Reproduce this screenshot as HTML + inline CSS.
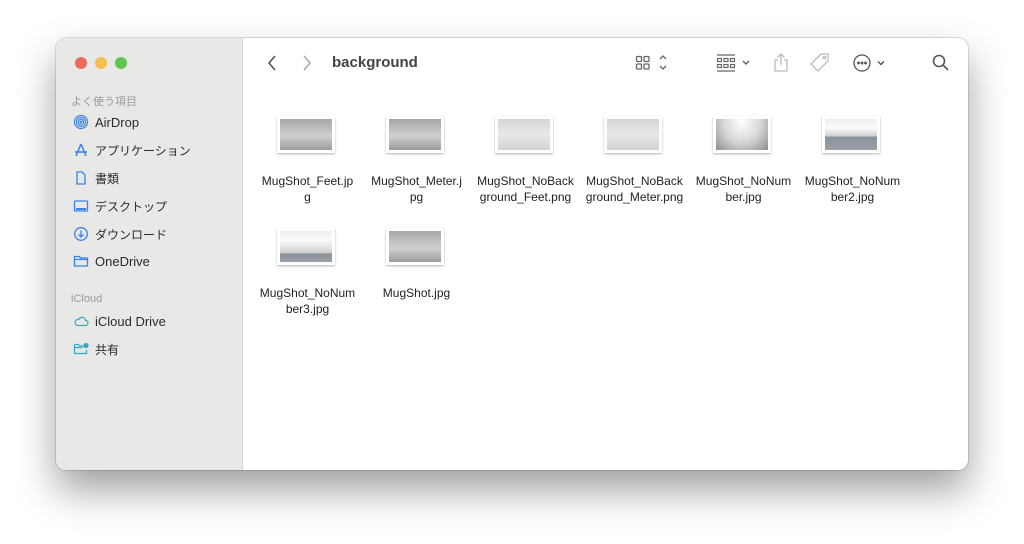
<!DOCTYPE html>
<html><head><meta charset="utf-8"><style>
*{margin:0;padding:0;box-sizing:border-box}
body{width:1024px;height:544px;background:#fff;position:relative;overflow:hidden;font-family:"Liberation Sans","Noto Sans CJK JP",sans-serif}
.win{position:absolute;left:56px;top:38px;width:912px;height:432px;border-radius:10px;background:#fff;box-shadow:0 20px 40px rgba(0,0,0,.38),0 0 0 1px rgba(0,0,0,.12);overflow:hidden}
.side{position:absolute;left:0;top:0;width:187px;height:432px;background:#e8e8e7;border-right:1px solid #d6d6d6}
.dot{position:absolute;top:19px;width:12px;height:12px;border-radius:50%}
.hdr{position:absolute;left:15px;font-size:11px;color:#9a9a9a}
.it{position:absolute;left:17px;font-size:13px;color:#2b2b2b;display:flex;align-items:center;height:18px}
.it.j{font-size:12px}
.it svg{width:16px;height:16px;margin-right:6px}
.title{position:absolute;left:276px;top:16px;font-size:15px;font-weight:bold;color:#444}
.tb{position:absolute;top:14px}
.f{position:absolute;width:109px;text-align:center;font-size:12px;line-height:16px;color:#222}
.fr{position:absolute;left:24px;top:1px;width:58px;height:37px;background:#fff;box-shadow:0 1px 2px rgba(0,0,0,.3);padding:3px}
.im{width:100%;height:100%}
.lb{position:absolute;left:0;width:109px}
</style></head><body>
<div class="win">
<div class="side">
<div class="dot" style="left:19px;background:#ec6a5e"></div>
<div class="dot" style="left:39px;background:#f4bf4f"></div>
<div class="dot" style="left:59px;background:#61c554"></div>
<div class="hdr" style="top:55px">よく使う項目</div>
<div class="it" style="top:75px"><svg viewBox="0 0 16 16" fill="none" stroke="#3b82e6" stroke-width="1.2"><circle cx="8" cy="8" r="6.5"/><circle cx="8" cy="8" r="4.5"/><circle cx="8" cy="8" r="2.5"/><circle cx="8" cy="8" r=".6" fill="#3b82e6"/></svg>AirDrop</div>
<div class="it j" style="top:103px"><svg viewBox="0 0 16 16" fill="none" stroke="#3b82e6" stroke-width="1.5"><path d="M8 2L3 14M8 2l5 12M2 10h12"/></svg>アプリケーション</div>
<div class="it j" style="top:131px"><svg viewBox="0 0 16 16" fill="none" stroke="#3b82e6" stroke-width="1.3"><path d="M4 2h5l3 3v9H4z"/></svg>書類</div>
<div class="it j" style="top:159px"><svg viewBox="0 0 16 16" fill="none" stroke="#3b82e6" stroke-width="1.3"><rect x="1.5" y="3" width="13" height="10" rx="1"/><path d="M3 11h10" stroke-width="2"/></svg>デスクトップ</div>
<div class="it j" style="top:187px"><svg viewBox="0 0 16 16" fill="none" stroke="#3b82e6" stroke-width="1.3"><circle cx="8" cy="8" r="6.3"/><path d="M8 4.5v6M5.5 8.5L8 11l2.5-2.5"/></svg>ダウンロード</div>
<div class="it" style="top:214px"><svg viewBox="0 0 16 16" fill="none" stroke="#3b82e6" stroke-width="1.3"><path d="M1.5 3.5h5l1 1.5h7v8h-13z M1.5 6.5h13"/></svg>OneDrive</div>
<div class="hdr" style="top:255px">iCloud</div>
<div class="it" style="top:274px"><svg viewBox="0 0 16 16" fill="none" stroke="#3aa6c4" stroke-width="1.2"><path d="M4.5 12.5h8a2.5 2.5 0 0 0 0-5 3.5 3.5 0 0 0-6.7-1A3 3 0 0 0 4.5 12.5z"/></svg>iCloud Drive</div>
<div class="it j" style="top:302px"><svg viewBox="0 0 16 16" fill="none" stroke="#3aa6c4" stroke-width="1.2"><path d="M1.5 3.5h4l1 1.5h4M1.5 3.5v9h12V9M1.5 6.5h8"/><circle cx="13" cy="4.5" r="2" fill="#3aa6c4"/></svg>共有</div>
</div>
<svg class="tb" style="left:210px" width="12" height="22" viewBox="0 0 12 22" fill="none" stroke="#555" stroke-width="1.6"><path d="M9 4L3 11l6 7"/></svg>
<svg class="tb" style="left:245px" width="12" height="22" viewBox="0 0 12 22" fill="none" stroke="#aaa" stroke-width="1.6"><path d="M3 4l6 7-6 7"/></svg>
<div class="title">background</div>
<svg class="tb" style="left:579px" width="36" height="22" viewBox="0 0 36 22" fill="none" stroke="#666" stroke-width="1.3"><rect x="1.5" y="4.5" width="5" height="5" rx="1"/><rect x="9" y="4.5" width="5" height="5" rx="1"/><rect x="1.5" y="12" width="5" height="5" rx="1"/><rect x="9" y="12" width="5" height="5" rx="1"/><path d="M25 7l3-3 3 3M25 14l3 3 3-3"/></svg>
<svg class="tb" style="left:660px" width="40" height="22" viewBox="0 0 40 22" fill="none" stroke="#666" stroke-width="1.2"><path d="M1 3h18M1 19h18"/><rect x="1.5" y="6.5" width="4" height="3"/><rect x="8" y="6.5" width="4" height="3"/><rect x="14.5" y="6.5" width="4" height="3"/><rect x="1.5" y="12.5" width="4" height="3"/><rect x="8" y="12.5" width="4" height="3"/><rect x="14.5" y="12.5" width="4" height="3"/><path d="M27 9l3 3 3-3" stroke-width="1.5"/></svg>
<svg class="tb" style="left:715px" width="20" height="22" viewBox="0 0 20 22" fill="none" stroke="#bbb" stroke-width="1.3"><path d="M7 8H4v11h12V8h-3M10 13V2M6.5 5.5L10 2l3.5 3.5"/></svg>
<svg class="tb" style="left:752px" width="24" height="22" viewBox="0 0 24 22" fill="none" stroke="#bbb" stroke-width="1.3"><path d="M13 2h7v7L10 19l-7-7z"/><circle cx="16.5" cy="5.5" r="1.2"/></svg>
<svg class="tb" style="left:795px" width="40" height="22" viewBox="0 0 40 22" fill="none" stroke="#555" stroke-width="1.3"><circle cx="11" cy="11" r="8"/><circle cx="7.5" cy="11" r=".8" fill="#555"/><circle cx="11" cy="11" r=".8" fill="#555"/><circle cx="14.5" cy="11" r=".8" fill="#555"/><path d="M27 9.5l3 3 3-3" stroke-width="1.5"/></svg>
<svg class="tb" style="left:875px" width="20" height="22" viewBox="0 0 20 22" fill="none" stroke="#555" stroke-width="1.6"><circle cx="8" cy="9" r="5.5"/><path d="M12 13l5 5"/></svg>

<div class="f" style="left:197px;top:77px"><div class="fr"><div class="im" style="background:linear-gradient(#a8a8a8,#cfcfcf 55%,#9c9c9c)"></div></div><div class="lb" style="top:58px">MugShot_Feet.jp<br>g</div></div>
<div class="f" style="left:306px;top:77px"><div class="fr"><div class="im" style="background:linear-gradient(#a5a5a5,#d0d0d0 55%,#9a9a9a)"></div></div><div class="lb" style="top:58px">MugShot_Meter.j<br>pg</div></div>
<div class="f" style="left:415px;top:77px"><div class="fr"><div class="im" style="background:linear-gradient(#d5d5d5,#e8e8e8 50%,#d2d2d2)"></div></div><div class="lb" style="top:58px">MugShot_NoBack<br>ground_Feet.png</div></div>
<div class="f" style="left:524px;top:77px"><div class="fr"><div class="im" style="background:linear-gradient(#d5d5d5,#e8e8e8 50%,#d2d2d2)"></div></div><div class="lb" style="top:58px">MugShot_NoBack<br>ground_Meter.png</div></div>
<div class="f" style="left:633px;top:77px"><div class="fr"><div class="im" style="background:radial-gradient(ellipse at 50% 10%,#fff,#d8d8d8 50%,#8e8e8e)"></div></div><div class="lb" style="top:58px">MugShot_NoNum<br>ber.jpg</div></div>
<div class="f" style="left:742px;top:77px"><div class="fr"><div class="im" style="background:linear-gradient(#eee,#fafafa 30%,#d0d0d0 55%,#8a929a 58%,#9aa0a6)"></div></div><div class="lb" style="top:58px">MugShot_NoNum<br>ber2.jpg</div></div>
<div class="f" style="left:197px;top:189px"><div class="fr"><div class="im" style="background:linear-gradient(#eee,#fafafa 30%,#d0d0d0 70%,#8a929a 74%,#9aa0a6)"></div></div><div class="lb" style="top:58px">MugShot_NoNum<br>ber3.jpg</div></div>
<div class="f" style="left:306px;top:189px"><div class="fr"><div class="im" style="background:linear-gradient(#a8a8a8,#d0d0d0 55%,#9c9c9c)"></div></div><div class="lb" style="top:58px">MugShot.jpg</div></div>
</div>
</body></html>
